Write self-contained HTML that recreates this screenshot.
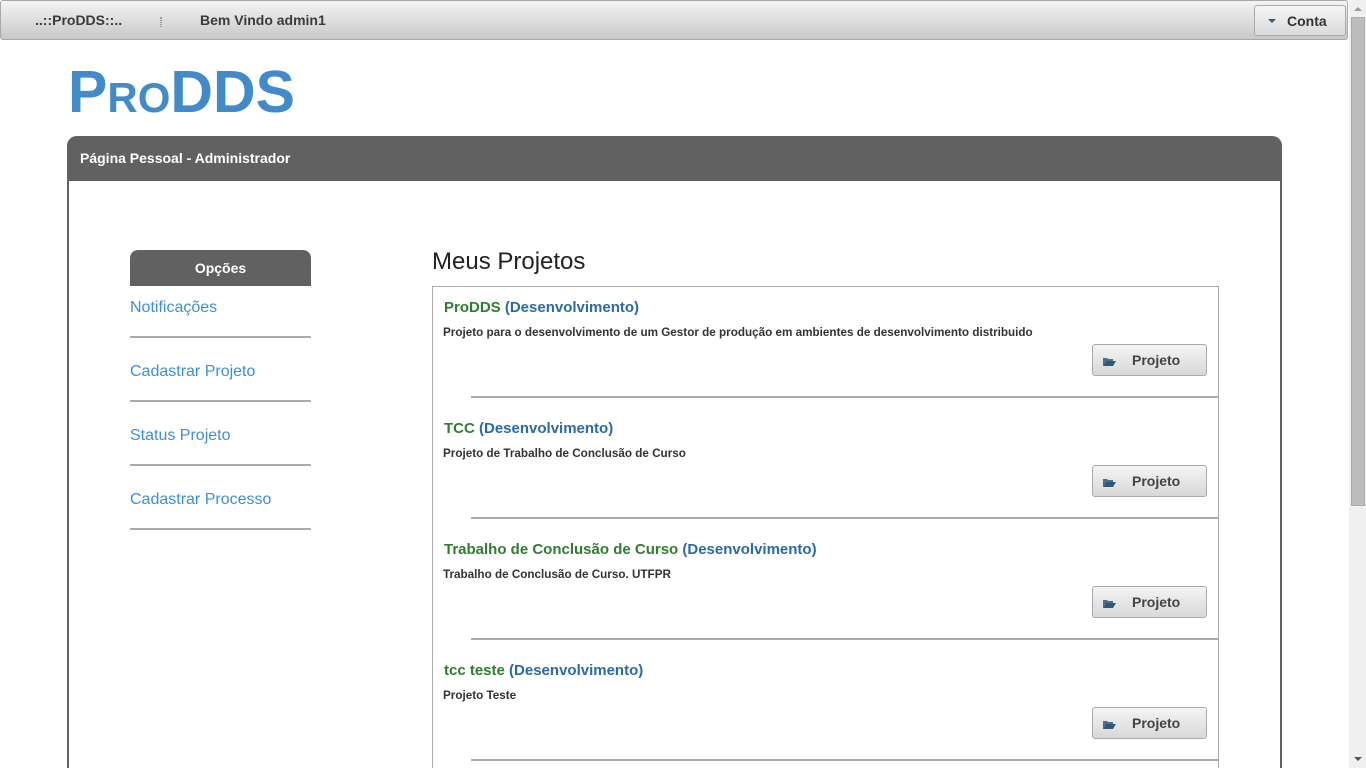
<!DOCTYPE html>
<html><head><meta charset="utf-8">
<style>
*{box-sizing:border-box;margin:0;padding:0}
html,body{width:1366px;height:768px;overflow:hidden;background:#fff;font-family:"Liberation Sans",Arial,sans-serif;position:relative}
.top{position:absolute;left:0;top:0;width:1348px;height:40px;border:1px solid #a8a8a8;border-radius:3px;background:linear-gradient(#f4f4f4,#c8c8c8)}
.top .t{position:absolute;top:11px;font-size:14px;font-weight:bold;color:#3b3b3b}
.grip{position:absolute;left:159px;top:16px;width:2px;height:10px;border-left:1px dotted #999;border-right:1px dotted #999}
.conta{position:absolute;left:1253px;top:4px;width:92px;height:31px;border:1px solid #aaa;border-radius:3px;background:linear-gradient(#f6f6f6,#dadada);font-size:14px;font-weight:bold;color:#333}
.conta span{position:absolute;left:32px;top:7px}
.conta i{position:absolute;left:13px;top:13px;width:0;height:0;border-left:4px solid transparent;border-right:4px solid transparent;border-top:4px solid #2e5a78}
.sb{position:absolute;left:1349px;top:0;width:17px;height:768px;background:#f0f0f0}
.sb .th{position:absolute;left:2px;top:17px;width:14px;height:489px;background:#bcbcbc;border:1px solid #aaa}
.sb .up{position:absolute;left:5px;top:7px;border-left:4px solid transparent;border-right:4px solid transparent;border-bottom:4px solid #999}
.sb .dn{position:absolute;left:5px;top:757px;border-left:4px solid transparent;border-right:4px solid transparent;border-top:4px solid #555}
.logo{position:absolute;left:68px;top:63px;font-size:59px;font-weight:bold;color:#428bca;line-height:59px}
.logo small{font-size:42px}
.panel{position:absolute;left:67px;top:136px;width:1215px;height:640px;border:2px solid #616161;border-top:none;border-radius:10px 10px 0 0}
.ph{position:absolute;left:-2px;top:0;width:1215px;height:45px;background:#616161;border-radius:10px 10px 0 0;color:#fff;font-size:14px;font-weight:bold;padding:14px 0 0 13px}
.opt{position:absolute;left:130px;top:250px;width:181px;height:36px;background:#616161;border-radius:8px 8px 0 0;color:#fff;font-weight:bold;font-size:14px;text-align:center;padding-top:10px}
.menu a{position:absolute;left:130px;width:181px;font-size:16px;color:#3e8fd6;text-decoration:none;border-bottom:2px solid #aaa;height:42px;padding-top:3px}
h2{position:absolute;left:432px;top:248px;font-size:24px;font-weight:normal;color:#222}
.box{position:absolute;left:432px;top:286px;width:787px;height:500px;border:1px solid #aaa}
.it{position:absolute;left:0;width:785px;height:121px}
.it .tt{position:absolute;left:11px;top:12px;font-size:15px;font-weight:bold;color:#2f7d2f}
.it .tt b{color:#2a6aa8}
.it .d{position:absolute;left:10px;top:39px;font-size:11.7px;font-weight:bold;color:#333}
.it .btn{position:absolute;left:659px;top:57px;width:115px;height:32px;border:1px solid #aaa;border-radius:3px;background:linear-gradient(#f4f4f4,#d8d8d8);font-size:14px;font-weight:bold;color:#444}
.it .btn span{position:absolute;left:39px;top:7px}
.it .btn svg{position:absolute;left:10px;top:12px}
.it .ln{position:absolute;left:38px;top:109px;width:747px;height:2px;background:#aaa}
</style></head><body>
<div class="top">
<div class="t" style="left:34px">..::ProDDS::..</div>
<div class="grip"></div>
<div class="t" style="left:199px">Bem Vindo admin1</div>
<div class="conta"><i></i><span>Conta</span></div>
</div>
<div class="logo">P<small>RO</small>DDS</div>
<div class="panel"><div class="ph">Página Pessoal - Administrador</div></div>
<div class="opt">Opções</div>
<div class="menu">
<a style="top:296px">Notificações</a>
<a style="top:360px">Cadastrar Projeto</a>
<a style="top:424px">Status Projeto</a>
<a style="top:488px">Cadastrar Processo</a>
</div>
<h2>Meus Projetos</h2>
<div class="box">
<div class="it" style="top:0"><div class="tt">ProDDS <b>(Desenvolvimento)</b></div><div class="d">Projeto para o desenvolvimento de um Gestor de produção em ambientes de desenvolvimento distribuido</div><div class="btn"><svg width="13" height="9" viewBox="0 0 13 9"><path d="M0 1h4l1 1h5v2H3L0 9z" fill="#4a6f8c"/><path d="M3 4h10L10 9H0z" fill="#2e5a78"/></svg><span>Projeto</span></div><div class="ln"></div></div>
<div class="it" style="top:121px"><div class="tt">TCC <b>(Desenvolvimento)</b></div><div class="d">Projeto de Trabalho de Conclusão de Curso</div><div class="btn"><svg width="13" height="9" viewBox="0 0 13 9"><path d="M0 1h4l1 1h5v2H3L0 9z" fill="#4a6f8c"/><path d="M3 4h10L10 9H0z" fill="#2e5a78"/></svg><span>Projeto</span></div><div class="ln"></div></div>
<div class="it" style="top:242px"><div class="tt">Trabalho de Conclusão de Curso <b>(Desenvolvimento)</b></div><div class="d">Trabalho de Conclusão de Curso. UTFPR</div><div class="btn"><svg width="13" height="9" viewBox="0 0 13 9"><path d="M0 1h4l1 1h5v2H3L0 9z" fill="#4a6f8c"/><path d="M3 4h10L10 9H0z" fill="#2e5a78"/></svg><span>Projeto</span></div><div class="ln"></div></div>
<div class="it" style="top:363px"><div class="tt">tcc teste <b>(Desenvolvimento)</b></div><div class="d">Projeto Teste</div><div class="btn"><svg width="13" height="9" viewBox="0 0 13 9"><path d="M0 1h4l1 1h5v2H3L0 9z" fill="#4a6f8c"/><path d="M3 4h10L10 9H0z" fill="#2e5a78"/></svg><span>Projeto</span></div><div class="ln"></div></div>
</div>
<div class="sb"><div class="up"></div><div class="th"></div><div class="dn"></div></div>
</body></html>
